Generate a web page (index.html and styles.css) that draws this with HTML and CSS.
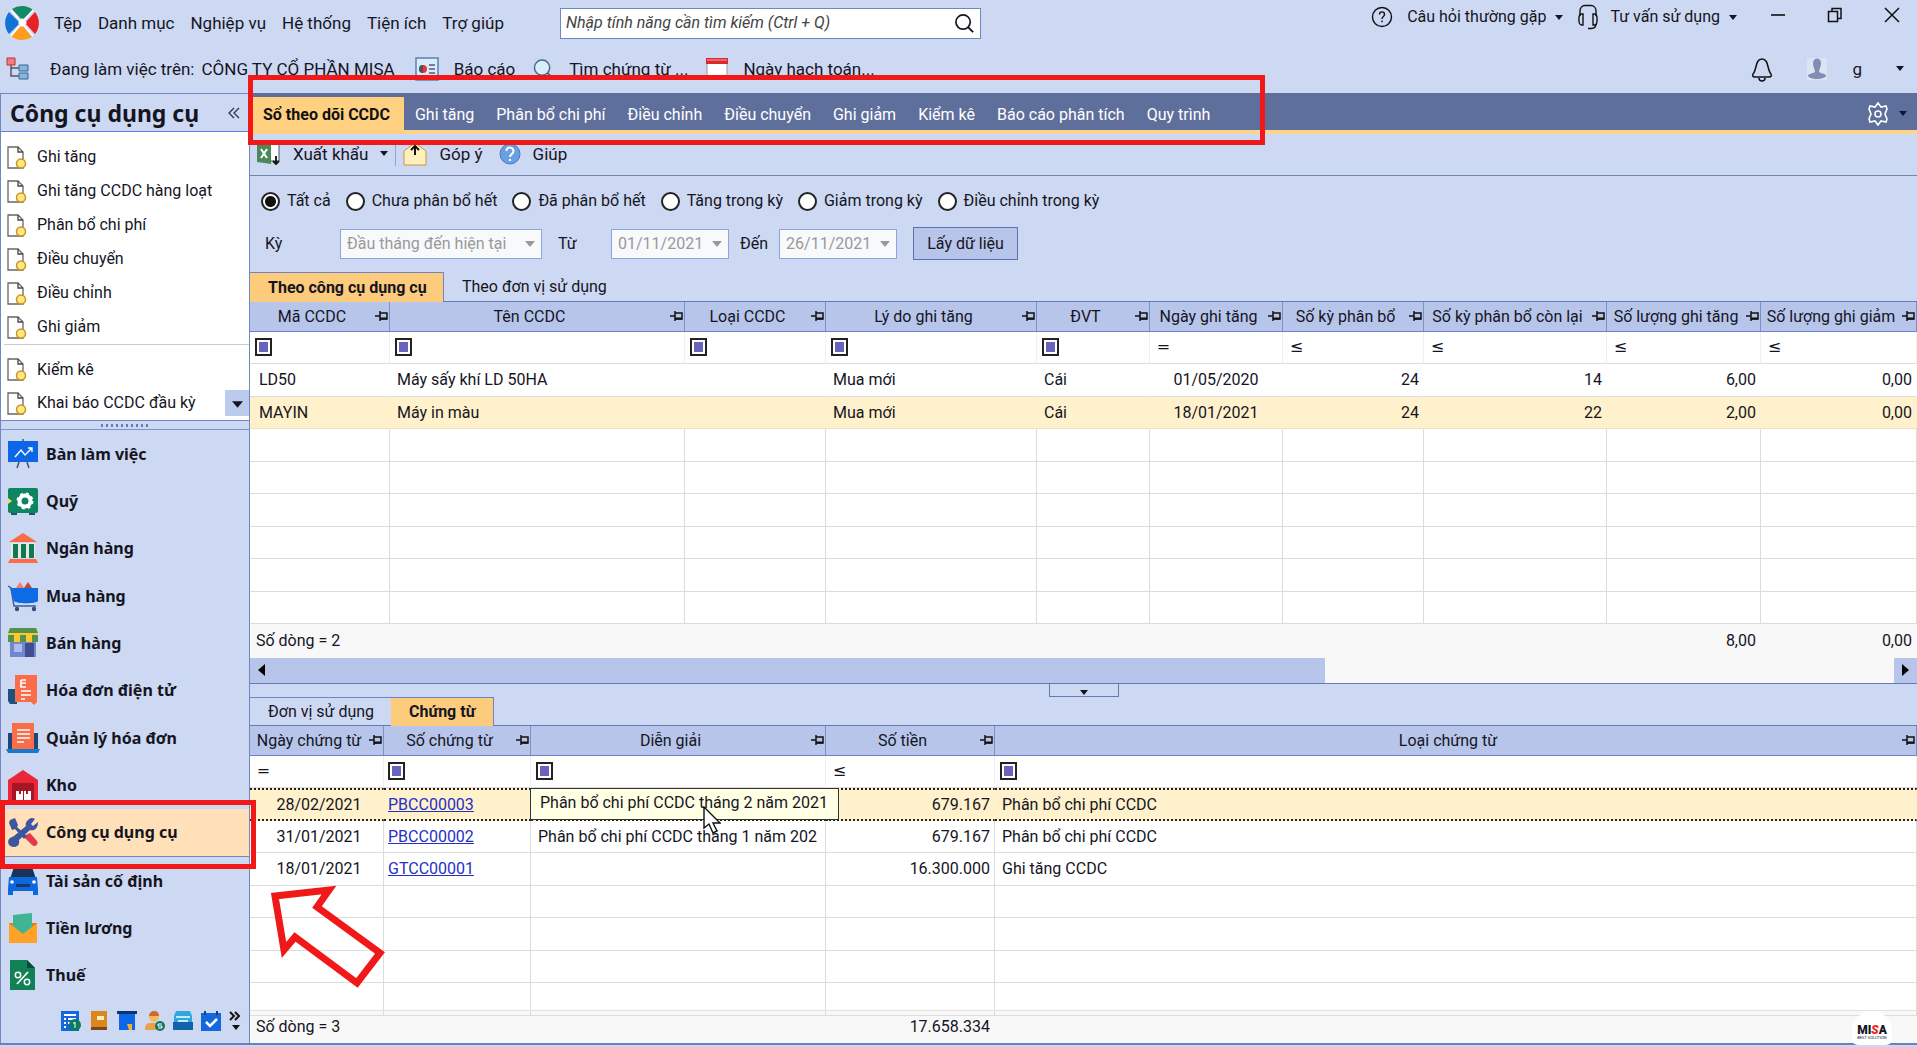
FILE: index.html
```
<!DOCTYPE html>
<html lang="vi">
<head>
	<meta charset="UTF-8">
	<meta name="viewport" content="width=device-width, initial-scale=1.0">
	<title>Công cụ dụng cụ</title>
	<link rel="stylesheet" href="styles.css">
</head>
<body>
	<svg class="sprite" aria-hidden="true">
		<symbol id="i-pin" viewBox="0 0 13 12"><path d="M0 6h5M5 1v10M5 3h7v6H5" fill="none" stroke="#111" stroke-width="1.5"/><path d="M5 8.5h7" stroke="#111" stroke-width="2"/></symbol>
		<symbol id="i-doc" viewBox="0 0 20 23"><path d="M1 1h10l5 5v16H1z" fill="#fff" stroke="#666" stroke-width="1.3"/><path d="M11 1v5h5" fill="none" stroke="#444" stroke-width="1.3"/><circle cx="14" cy="17.5" r="4.5" fill="#ffe680" stroke="#c99420" stroke-width="1.5"/></symbol>
		<symbol id="i-down" viewBox="0 0 10 6"><path d="M0 0h10L5 6z" fill="currentColor"/></symbol>
		<symbol id="i-search" viewBox="0 0 22 22"><circle cx="9.500" cy="9.500" r="7.500" fill="none" stroke="currentColor" stroke-width="1.8"/><path d="M15 15l5 5" stroke="currentColor" stroke-width="2"/></symbol>
	</svg>

	<header class="titlebar">
		<svg class="logo" viewBox="0 0 36 36">
			<path d="M8 4A17.500 17.500 0 0 1 29 5L18 15z" fill="#128a63"/>
			<path d="M31 7a17.500 17.500 0 0 1 0 22L21 18z" fill="#ea2027"/>
			<path d="M28 32A17.500 17.500 0 0 1 7 31l11-11z" fill="#ff9d1c"/>
			<path d="M5 29A17.500 17.500 0 0 1 5 7l11 11z" fill="#1273d4"/>
			<path d="M18 13l5 5-5 4-4-4z" fill="#fff"/>
			<path d="M7 5l22 26M29 5L7 31" stroke="#fff" stroke-width="1.5"/>
		</svg>
		<nav class="menu">
			<a href="#">Tệp</a>
			<a href="#">Danh mục</a>
			<a href="#">Nghiệp vụ</a>
			<a href="#">Hệ thống</a>
			<a href="#">Tiện ích</a>
			<a href="#">Trợ giúp</a>
		</nav>
		<div class="search">
			<input type="text" aria-label="Tìm kiếm" placeholder="Nhập tính năng cần tìm kiếm (Ctrl + Q)">
			<svg width="21" height="21"><use href="#i-search"/></svg>
		</div>
		<div class="support">
			<button class="plain"><svg width="22" height="22" viewBox="0 0 22 22"><circle cx="11" cy="11" r="9.500" fill="none" stroke="#111" stroke-width="1.4"/><path d="M8.500 8.500c0-3.500 5-3.500 5 0 0 2-2.500 2-2.500 4.500M11 14.500v1.800" fill="none" stroke="#111" stroke-width="1.4"/></svg><span>Câu hỏi thường gặp</span><svg class="caret"><use href="#i-down"/></svg></button>
			<button class="plain"><svg width="22" height="26" viewBox="0 0 22 26"><path d="M3 12V7c0-3 2-5.500 5-5.500h6c3 0 5 2.500 5 5.500v5M19 20c0 3-2 4.500-5 4.500h-3" fill="none" stroke="#111" stroke-width="1.4"/><path d="M6 10v11H4.500C1 21 1 10 4.500 10zM16 10v11h1.500c3.500 0 3.500-11 0-11z" fill="none" stroke="#111" stroke-width="1.4"/></svg><span>Tư vấn sử dụng</span><svg class="caret"><use href="#i-down"/></svg></button>
		</div>
		<div class="window-buttons">
			<button aria-label="Thu nhỏ"><svg width="16" height="16"><path d="M1 8h14" stroke="#111" stroke-width="1.6"/></svg></button>
			<button aria-label="Khôi phục"><svg width="16" height="16"><path d="M1.500 4.500h9v10h-9zM5 4V1.500h9v10h-3.500" fill="none" stroke="#111" stroke-width="1.5"/></svg></button>
			<button aria-label="Đóng"><svg width="16" height="16"><path d="M1 1l14 14M15 1L1 15" stroke="#111" stroke-width="1.5"/></svg></button>
		</div>
	</header>

	<div class="infobar">
		<svg class="tree" width="24" height="24" viewBox="0 0 24 24"><path d="M5 8v11h8M5 11h8" fill="none" stroke="#556" stroke-width="1.500"/><path d="M1 1h8v7H1z" fill="#f47c7c" stroke="#b33" /><path d="M13 8h9v6h-9zM13 16h9v6h-9z" fill="#86b6e0" stroke="#3b6691"/></svg>
		<span class="workplace">Đang làm việc trên:</span>
		<span class="company">CÔNG TY CỔ PHẦN MISA</span>
		<button class="plain"><svg width="24" height="24" viewBox="0 0 24 24"><path d="M1 1h22v22H1z" fill="#d9ecfa" stroke="#5682b4" stroke-width="1.500"/><circle cx="8" cy="12" r="4" fill="#e33"/><path d="M8 8a4 4 0 0 0 0 8z" fill="#456"/><path d="M14 8h6M14 12h6M14 16h6" stroke="#557" stroke-width="1.500"/></svg><span>Báo cáo</span></button>
		<button class="plain"><svg width="21" height="24" viewBox="0 0 22 22"><circle cx="9.500" cy="9.500" r="8" fill="#d7effa" stroke="#456a8d" stroke-width="1.500"/><path d="M15 15l6 6" stroke="#456a8d" stroke-width="2"/></svg><span>Tìm chứng từ ...</span></button>
		<button class="plain"><svg width="22" height="22" viewBox="0 0 22 22"><path d="M1 1h20v20H1z" fill="#fff" stroke="#999"/><path d="M0 0h22v6H0z" fill="#d9292f"/><path d="M1 2h20" stroke="#f8a5a5"/></svg><span>Ngày hạch toán...</span></button>
		<div class="account">
			<svg width="22" height="26" viewBox="0 0 22 26"><path d="M2 18c4-4 2-15 9-15s5 11 9 15c1 2 0 3-2 3H4c-2 0-3-1-2-3zM8 22c0 4 6 4 6 0" fill="none" stroke="#111" stroke-width="1.500"/></svg>
			<svg width="20" height="22" viewBox="0 0 20 22"><path d="M0 0h20v22H0z" fill="#dce4f4"/><path d="M6 5c0-6 8-6 8 0 0 4-2 6-2 9 2 2 7 1 7 4-2 4-16 4-18 0 0-3 5-2 7-4 0-3-2-5-2-9z" fill="#818db3"/></svg>
			<span>g</span>
			<svg class="caret"><use href="#i-down"/></svg>
		</div>
	</div>

	<div class="workspace">
		<aside class="sidebar">
			<h1>Công cụ dụng cụ <button class="plain" aria-label="Thu gọn"><svg width="12" height="12"><path d="M6 1L1 6l5 5M11 1L6 6l5 5" fill="none" stroke="#334" stroke-width="1.300"/></svg></button></h1>
			<ul class="tasks">
				<li><svg><use href="#i-doc"/></svg><a href="#">Ghi tăng</a></li>
				<li><svg><use href="#i-doc"/></svg><a href="#">Ghi tăng CCDC hàng loạt</a></li>
				<li><svg><use href="#i-doc"/></svg><a href="#">Phân bổ chi phí</a></li>
				<li><svg><use href="#i-doc"/></svg><a href="#">Điều chuyển</a></li>
				<li><svg><use href="#i-doc"/></svg><a href="#">Điều chỉnh</a></li>
				<li><svg><use href="#i-doc"/></svg><a href="#">Ghi giảm</a></li>
				<li class="divided"><svg><use href="#i-doc"/></svg><a href="#">Kiểm kê</a></li>
				<li><svg><use href="#i-doc"/></svg><a href="#">Khai báo CCDC đầu kỳ</a><button class="scroll-down" aria-label="Cuộn xuống"><svg><use href="#i-down"/></svg></button></li>
			</ul>
			<div class="grip"></div>
			<nav class="modules">
				<a href="#"><svg viewBox="0 0 30 30"><path d="M15 0v3M11 23l-2 6M19 23l2 6" stroke="#456" stroke-width="1.500"/><path d="M0 2h30v21H0z" fill="#0d65e8"/><path d="M7 18l6-7 4 5 7-7M20 9h4v4" fill="none" stroke="#fff" stroke-width="1.400"/></svg>Bàn làm việc</a>
				<a href="#"><svg viewBox="0 0 30 30"><path d="M3 26h6v3H3zM21 26h6v3h-6z" fill="#256"/><rect y="2" width="30" height="25" rx="2" fill="#0c8560"/><path d="M0 12l4 3-4 3z" fill="#ffdc3d"/><circle cx="17" cy="15" r="5.500" fill="none" stroke="#fff" stroke-width="4"/><circle cx="17" cy="15" r="7.500" fill="none" stroke="#fff" stroke-width="2" stroke-dasharray="3 3"/></svg>Quỹ</a>
				<a href="#"><svg viewBox="0 0 30 30"><path d="M1 9L15 0l14 9zM2 26h26l2 4H0z" fill="#fb6b46"/><path d="M3 10h24v15H3z" fill="#e8e9e4"/><path d="M5 11h5v14H5zM13 11h5v14h-5zM21 11h5v14h-5z" fill="#0d7a55"/></svg>Ngân hàng</a>
				<a href="#"><svg viewBox="0 0 30 30"><path d="M8 7l4-6 4 6z" fill="#ef8069"/><path d="M16 7l4-6 4 6z" fill="#c44934"/><path d="M0 5l3 2 3 18h22" fill="none" stroke="#345f9d" stroke-width="1.500"/><path d="M2 7h28v13c-2 3-22 3-24 0z" fill="#0e6be6"/><circle cx="9" cy="28" r="2.200" fill="#344c80"/><circle cx="26" cy="28" r="2.200" fill="#344c80"/></svg>Mua hàng</a>
				<a href="#"><svg viewBox="0 0 30 30"><path d="M2 10h26v19H2z" fill="#7187ce"/><path d="M17 15h9v14h-9z" fill="#414e91"/><path d="M6 16h8v8H6z" fill="#aebced"/><path d="M2 0h26l2 7v7H0V7z" fill="#ffc62d"/><path d="M0 7h6v7H0zM12 7h6v7h-6zM24 7h6v7h-6zM2 0h26l2 5H0z" fill="#51924d"/></svg>Bán hàng</a>
				<a href="#"><svg viewBox="0 0 30 30"><path d="M0 14h9v15H2l-2-3z" fill="#1c5282"/><path d="M7 0h22v27l-3 3-3-3H7z" fill="#fb6d48"/><path d="M13 5h5M13 8h5M13 5v7h5M13 16h10M13 20h10M13 24h4" fill="none" stroke="#fff" stroke-width="1.700"/></svg>Hóa đơn điện tử</a>
				<a href="#"><svg viewBox="0 0 30 30"><path d="M0 10h30v17H0z" fill="#1b477b"/><path d="M4 0h22v26H4z" fill="#fb6d48"/><path d="M9 7h13M9 11h13M9 15h13M9 19h7" stroke="#fff" stroke-width="1.500"/><path d="M-2 26h34l-2 4H0z" fill="#1879c8"/></svg>Quản lý hóa đơn</a>
				<a href="#"><svg viewBox="0 0 30 30"><path d="M0 10L15 0l15 10v20H0z" fill="#e92738"/><path d="M4 13h22v17H4z" fill="#a71627"/><path d="M8 21h3v3h2v-3h2v9H8zM16 21h2v3h2v-3h3v9h-7z" fill="#fff"/></svg>Kho</a>
				<a href="#" class="current" aria-current="page"><svg viewBox="0 0 30 30"><path d="M18 18l4-2 7 8c2 3-2 7-5 4l-7-7z" fill="#e3394b"/><path d="M2 3l5-2 3 7-1 2 10 9-3 3-9-10-3 1-3-7z" fill="#3c56a0"/><path d="M20 3c3-3 5-2 7-1l-4 5 2 2 5-4c0 7-4 9-8 8L11 23c1 5-2 7-5 7-5 0-8-5-4-9l4-2L18 9c-1-2 0-4 2-6z" fill="#3c56a0"/></svg>Công cụ dụng cụ<span class="highlight"></span></a>
				<a href="#"><svg viewBox="0 0 30 30"><path d="M6 1h18l4 12H2z" fill="#17325d"/><path d="M1 11h28l1 12v6h-5v-4H5v4H0v-6z" fill="#0d68de"/><path d="M8 18h14v3H8z" fill="#183966"/><circle cx="4" cy="16" r="1.800" fill="#fff"/><circle cx="26" cy="16" r="1.800" fill="#fff"/></svg>Tài sản cố định</a>
				<a href="#"><svg viewBox="0 0 30 30"><path d="M1 10h28v18H1z" fill="#df7919"/><path d="M5 2l19-2v15l-9 7-10-7z" fill="#3fb596"/><path d="M1 10l14 11L29 10v20H1z" fill="#ffa226"/></svg>Tiền lương</a>
				<a href="#"><svg viewBox="0 0 30 30"><path d="M2 0h17l8 8v22H2z" fill="#128056"/><path d="M19 0v8h8z" fill="#074c37"/><path d="M9 24L20 12" stroke="#fff" stroke-width="1.700"/><circle cx="10" cy="15" r="2.700" fill="none" stroke="#fff" stroke-width="1.500"/><circle cx="19" cy="22" r="2.700" fill="none" stroke="#fff" stroke-width="1.500"/></svg>Thuế</a>
			</nav>
			<div class="shortcuts">
				<button aria-label="Hóa đơn"><svg viewBox="0 0 20 20"><path d="M0 0h18v20H0z" fill="#1268dc"/><path d="M3 4h12M3 8h2M7 8h8M3 12h2M7 12h3M3 16h2" stroke="#fff" stroke-width="2"/><circle cx="14" cy="14" r="6" fill="#087b63"/><path d="M14 11v6M12 12h2" stroke="#fff"/></svg></button>
				<button aria-label="Sổ"><svg viewBox="0 0 20 20"><path d="M2 0h16v19H2z" fill="#df861b"/><path d="M2 16h16v3H2z" fill="#7c451e"/><path d="M8 5h7v4H8z" fill="#fff1cb"/></svg></button>
				<button aria-label="Hợp đồng"><svg viewBox="0 0 20 20"><path d="M2 1h16v18H2z" fill="#0c66e6"/><path d="M0 0h20v3H0z" fill="#0a3574"/><path d="M10 13h5v6h-3z" fill="#eeb337"/></svg></button>
				<button aria-label="Khách hàng"><svg viewBox="0 0 20 20"><circle cx="9" cy="6" r="5" fill="#f6b95d"/><path d="M4 5c0-6 10-7 10 0z" fill="#d26830"/><path d="M0 19c0-7 3-7 8-7s8 2 8 7z" fill="#ec9f43"/><circle cx="15" cy="15" r="5" fill="#0c7560"/><path d="M17 13h-4v2h4v2h-4" fill="none" stroke="#fff"/></svg></button>
				<button aria-label="Kho lưu"><svg viewBox="0 0 20 20"><path d="M3 0h14l2 5v9H1V5z" fill="#31a6dc"/><path d="M0 11h20v8H0z" fill="#1263a8"/><path d="M3 6h14M5 10h10" stroke="#b9edff" stroke-width="2"/></svg></button>
				<button aria-label="Công việc"><svg viewBox="0 0 20 20"><path d="M0 2h20v18H0z" fill="#1268dc"/><path d="M4 0v4M16 0v4" stroke="#164378" stroke-width="2"/><path d="M5 11l4 4 7-7" fill="none" stroke="#fff" stroke-width="2.500"/></svg></button>
				<button aria-label="Thêm"><svg viewBox="0 0 20 20"><path d="M1 1l4 4-4 4M6 1l4 4-4 4" fill="none" stroke="#111" stroke-width="2"/><path d="M3 14h8l-4 5z" fill="#111"/></svg></button>
			</div>
		</aside>

		<main class="content">
			<nav class="tabbar">
				<a href="#" class="active">Sổ theo dõi CCDC</a>
				<a href="#">Ghi tăng</a>
				<a href="#">Phân bổ chi phí</a>
				<a href="#">Điều chỉnh</a>
				<a href="#">Điều chuyển</a>
				<a href="#">Ghi giảm</a>
				<a href="#">Kiểm kê</a>
				<a href="#">Báo cáo phân tích</a>
				<a href="#">Quy trình</a>
				<button class="plain settings" aria-label="Tùy chọn"><svg width="22" height="24" viewBox="0 0 22 24"><path d="M11 1l3 4 5-1 1 3-2 5 2 5-1 3-5-1-3 4-3-4-5 1-1-3 2-5-2-5 1-3 5 1z" fill="none" stroke="#fff" stroke-width="1.600"/><circle cx="11" cy="12" r="3" fill="none" stroke="#fff" stroke-width="1.600"/></svg><svg class="caret"><use href="#i-down"/></svg></button>
				<span class="highlight"></span>
			</nav>

			<div class="toolbar">
				<button class="plain"><svg width="24" height="24" viewBox="0 0 24 24"><path d="M10 2h12v17H10z" fill="#fff" stroke="#456"/><path d="M0 3l14-2v21L0 20z" fill="#4c8958"/><path d="M4 7l6 9M10 7l-6 9" stroke="#fff" stroke-width="2"/><path d="M19 14v7M16 19l3 3 3-3" fill="none" stroke="#111" stroke-width="1.800"/></svg><span>Xuất khẩu</span><svg class="caret"><use href="#i-down"/></svg></button>
				<button class="plain split"><svg width="24" height="24" viewBox="0 0 24 24"><path d="M1 9l11-8 11 8v14H1z" fill="#fff0bd" stroke="#c59941"/><path d="M12 13V5M8 8l4-4 4 4" fill="none" stroke="#111" stroke-width="2"/></svg><span>Góp ý</span></button>
				<button class="plain"><svg width="22" height="22" viewBox="0 0 22 22"><circle cx="11" cy="11" r="10" fill="#69a0e2" stroke="#4779c1"/><path d="M7.500 8c0-5 7-4 7 0 0 3-3.500 3-3.500 6M11 16v2" fill="none" stroke="#fff" stroke-width="2"/></svg><span>Giúp</span></button>
			</div>

			<form class="filters">
				<div class="radios">
					<label><input type="radio" name="scope" checked>Tất cả</label>
					<label><input type="radio" name="scope">Chưa phân bổ hết</label>
					<label><input type="radio" name="scope">Đã phân bổ hết</label>
					<label><input type="radio" name="scope">Tăng trong kỳ</label>
					<label><input type="radio" name="scope">Giảm trong kỳ</label>
					<label><input type="radio" name="scope">Điều chỉnh trong kỳ</label>
				</div>
				<div class="period">
					<label class="first" for="period">Kỳ</label>
					<div class="picker wide"><select id="period" disabled><option>Đầu tháng đến hiện tại</option></select><svg class="caret"><use href="#i-down"/></svg></div>
					<label class="from" for="from">Từ</label>
					<div class="picker"><input type="text" id="from" value="01/11/2021" disabled><svg class="caret"><use href="#i-down"/></svg></div>
					<label for="to">Đến</label>
					<div class="picker"><input type="text" id="to" value="26/11/2021" disabled><svg class="caret"><use href="#i-down"/></svg></div>
					<button type="button" class="load">Lấy dữ liệu</button>
				</div>
			</form>

			<div class="subtabs">
				<button class="on wide">Theo công cụ dụng cụ</button>
				<button>Theo đơn vị sử dụng</button>
			</div>
			<div class="grid">
				<table>
					<colgroup><col class="w140"><col class="w295"><col class="w141"><col class="w211"><col class="w113"><col class="w133"><col class="w141"><col class="w183"><col class="w154"><col></colgroup>
					<thead>
						<tr>
							<th>Mã CCDC<svg><use href="#i-pin"/></svg></th>
							<th>Tên CCDC<svg><use href="#i-pin"/></svg></th>
							<th>Loại CCDC<svg><use href="#i-pin"/></svg></th>
							<th>Lý do ghi tăng<svg><use href="#i-pin"/></svg></th>
							<th>ĐVT<svg><use href="#i-pin"/></svg></th>
							<th>Ngày ghi tăng<svg><use href="#i-pin"/></svg></th>
							<th>Số kỳ phân bổ<svg><use href="#i-pin"/></svg></th>
							<th>Số kỳ phân bổ còn lại<svg><use href="#i-pin"/></svg></th>
							<th>Số lượng ghi tăng<svg><use href="#i-pin"/></svg></th>
							<th>Số lượng ghi giảm<svg><use href="#i-pin"/></svg></th>
						</tr>
						<tr class="filter">
							<td><button class="box" aria-label="Điều kiện"></button></td>
							<td><button class="box" aria-label="Điều kiện"></button></td>
							<td><button class="box" aria-label="Điều kiện"></button></td>
							<td><button class="box" aria-label="Điều kiện"></button></td>
							<td><button class="box" aria-label="Điều kiện"></button></td>
							<td><button class="op">=</button></td>
							<td><button class="op">≤</button></td>
							<td><button class="op">≤</button></td>
							<td><button class="op">≤</button></td>
							<td><button class="op">≤</button></td>
						</tr>
					</thead>
					<tbody>
						<tr class="filled"><td>LD50</td><td>Máy sấy khí LD 50HA</td><td></td><td>Mua mới</td><td>Cái</td><td class="date">01/05/2020</td><td class="num">24</td><td class="num">14</td><td class="num">6,00</td><td class="num">0,00</td></tr>
						<tr class="filled selected"><td>MAYIN</td><td>Máy in màu</td><td></td><td>Mua mới</td><td>Cái</td><td class="date">18/01/2021</td><td class="num">24</td><td class="num">22</td><td class="num">2,00</td><td class="num">0,00</td></tr>
						<tr><td></td><td></td><td></td><td></td><td></td><td></td><td></td><td></td><td></td><td></td></tr>
						<tr><td></td><td></td><td></td><td></td><td></td><td></td><td></td><td></td><td></td><td></td></tr>
						<tr><td></td><td></td><td></td><td></td><td></td><td></td><td></td><td></td><td></td><td></td></tr>
						<tr><td></td><td></td><td></td><td></td><td></td><td></td><td></td><td></td><td></td><td></td></tr>
						<tr><td></td><td></td><td></td><td></td><td></td><td></td><td></td><td></td><td></td><td></td></tr>
						<tr><td></td><td></td><td></td><td></td><td></td><td></td><td></td><td></td><td></td><td></td></tr>
					</tbody>
					<tfoot>
						<tr><td>Số dòng = 2</td><td></td><td></td><td></td><td></td><td></td><td></td><td></td><td class="num">8,00</td><td class="num">0,00</td></tr>
					</tfoot>
				</table>
			</div>
			<div class="hscroll">
				<button class="thumb" aria-label="Cuộn trái"><svg width="7" height="12"><path d="M7 0v12L0 6z"/></svg></button>
				<button class="next" aria-label="Cuộn phải"><svg width="7" height="12"><path d="M0 0v12l7-6z"/></svg></button>
			</div>
			<div class="splitter"><button aria-label="Thu gọn"><svg class="caret"><use href="#i-down"/></svg></button></div>

			<div class="subtabs lower">
				<button>Đơn vị sử dụng</button>
				<button class="on">Chứng từ</button>
			</div>
			<div class="grid detail">
				<table>
					<colgroup><col class="w134"><col class="w147"><col class="w295"><col class="w169"><col></colgroup>
					<thead>
						<tr>
							<th>Ngày chứng từ<svg><use href="#i-pin"/></svg></th>
							<th>Số chứng từ<svg><use href="#i-pin"/></svg></th>
							<th>Diễn giải<svg><use href="#i-pin"/></svg></th>
							<th>Số tiền<svg><use href="#i-pin"/></svg></th>
							<th>Loại chứng từ<svg><use href="#i-pin"/></svg></th>
						</tr>
						<tr class="filter">
							<td><button class="op">=</button></td>
							<td><button class="box" aria-label="Điều kiện"></button></td>
							<td><button class="box" aria-label="Điều kiện"></button></td>
							<td><button class="op">≤</button></td>
							<td><button class="box" aria-label="Điều kiện"></button></td>
						</tr>
					</thead>
					<tbody>
						<tr class="filled selected focused"><td class="date">28/02/2021</td><td><a href="#">PBCC00003</a></td><td class="has-tip"><span class="tip">Phân bổ chi phí CCDC tháng 2 năm 2021<svg class="cursor" viewBox="0 0 18 28"><path d="M1 1v21l5-4 4 9 4-2-4-8h7z" fill="#fff" stroke="#111" stroke-width="1.400"/></svg></span></td><td class="num">679.167</td><td>Phân bổ chi phí CCDC</td></tr>
						<tr><td class="date">31/01/2021</td><td><a href="#">PBCC00002</a></td><td>Phân bổ chi phí CCDC tháng 1 năm 202</td><td class="num">679.167</td><td>Phân bổ chi phí CCDC</td></tr>
						<tr><td class="date">18/01/2021</td><td><a href="#">GTCC00001</a></td><td></td><td class="num">16.300.000</td><td>Ghi tăng CCDC</td></tr>
						<tr><td></td><td></td><td></td><td></td><td></td></tr>
						<tr><td></td><td></td><td></td><td></td><td></td></tr>
						<tr><td></td><td></td><td></td><td></td><td></td></tr>
						<tr><td></td><td></td><td></td><td></td><td></td></tr>
					</tbody>
				</table>
				<svg class="pointer" viewBox="0 0 122 110"><path d="M8 15l54-6-12 17 63 46-23 30-62-46-11 13z" fill="none" stroke="#f01818" stroke-width="7"/></svg>
			</div>
			<div class="totals">
				<span class="count">Số dòng = 3</span>
				<span class="sum">17.658.334</span>
			</div>
			<div class="brand"><b>MI<i>S</i>A</b><small>BEST SOLUTION</small></div>
		</main>
	</div>
</body>
</html>
```

FILE: styles.css
```
* {
	margin: 0;
	padding: 0;
	box-sizing: border-box;
}

body {
	height: 100vh;
	display: flex;
	flex-direction: column;
	overflow: hidden;
	font-family: Roboto, "Liberation Sans", sans-serif;
	font-size: 16px;
	line-height: 20px;
	color: #15151f;
	background: #cdd8f2;
}

a {
	color: inherit;
	text-decoration: none;
}

button,
input,
select {
	font: inherit;
	color: inherit;
}

button {
	border: none;
	background: none;
}

svg {
	flex: none;
}

.sprite {
	position: absolute;
	width: 0;
	height: 0;
}

.plain {
	display: flex;
	align-items: center;
	white-space: nowrap;
}

.caret {
	width: 8px;
	height: 5px;
}

/* title bar */
.titlebar {
	display: flex;
	align-items: center;
	height: 46px;
	padding-left: 4px;
	font-size: 17px;
}

.logo {
	width: 36px;
	height: 36px;
}

.menu {
	display: flex;
	gap: 16px;
	width: 520px;
	padding-left: 14px;
}

.search {
	display: flex;
	align-items: center;
	width: 421px;
	height: 31px;
	padding: 0 5px;
	background: #fff;
	border: 1px solid #6f87c0;
}

.search input {
	flex: 1;
	border: none;
	outline: none;
	font-size: 16px;
	font-style: italic;
}

.search input::placeholder {
	color: #444;
}

.support {
	display: flex;
	gap: 14px;
	margin-left: auto;
	margin-bottom: 12px;
	font-size: 16px;
}

.support span {
	margin: 0 9px 0 14px;
}

.support .plain + .plain span {
	margin-left: 11px;
}

.window-buttons {
	display: flex;
	gap: 41px;
	margin: 0 17px 16px 33px;
}

.window-buttons svg {
	display: block;
}

.infobar {
	display: flex;
	align-items: center;
	height: 47px;
	padding: 0 0 2px 6px;
	font-size: 17px;
}

.workplace {
	margin: 0 7px 0 20px;
}

.company {
	margin-right: 20px;
}

.infobar .plain {
	gap: 15px;
	margin-right: 18px;
}

.account {
	display: flex;
	align-items: center;
	margin-left: auto;
	padding-right: 13px;
}

.account svg + svg {
	margin-left: 34px;
}

.account span {
	margin: 0 34px 0 25px;
}

.workspace {
	flex: 1;
	display: flex;
	min-height: 0;
	border-bottom: 2px solid #6c82c0;
	margin-bottom: 2px;
}

/* sidebar */
.sidebar {
	display: flex;
	flex-direction: column;
	width: 250px;
	border: 1px solid #7187bf;
	border-bottom: none;
}

.sidebar h1 {
	display: flex;
	align-items: center;
	justify-content: space-between;
	height: 38px;
	padding: 0 9px;
	font-family: "Noto Sans", sans-serif;
	font-size: 23px;
	line-height: 30px;
	border-bottom: 1px solid #6d78e0;
	white-space: nowrap;
}

.tasks {
	list-style: none;
	padding-top: 8px;
	background: #fff;
}

.tasks li {
	display: flex;
	align-items: center;
	height: 34px;
	padding-left: 6px;
}

.tasks li svg {
	width: 20px;
	height: 23px;
	margin-right: 10px;
}

.tasks .divided {
	height: 42px;
	margin-left: 3px;
	padding: 8px 0 0 3px;
	border-top: 1px solid #ccc;
}

.tasks .scroll-down {
	width: 24px;
	height: 26px;
	margin: 0 0 0 auto;
	background: #bccaed;
}

.tasks .scroll-down svg {
	width: 11px;
	height: 7px;
	margin: 0;
}

.grip {
	flex: none;
	height: 10px;
	border-top: 1px solid #7187bf;
	border-bottom: 1px solid #7c93d0;
}

.grip::before {
	content: "";
	display: block;
	width: 48px;
	height: 3px;
	margin: 3px auto 0;
	background: repeating-linear-gradient(90deg, #667cb4 0 2px, transparent 2px 5px);
}

.modules {
	flex: 1;
	display: flex;
	flex-direction: column;
	min-height: 0;
}

.modules a {
	position: relative;
	flex: 1;
	display: flex;
	align-items: center;
	gap: 8px;
	padding-left: 7px;
	font-family: "Noto Sans", sans-serif;
	font-weight: bold;
}

.modules a > svg {
	width: 30px;
	height: 30px;
	overflow: visible;
}

.modules .current {
	background: #ffe0b8;
	border-bottom: 1px solid #7187bf;
	z-index: 2;
}

/* red marker frames */
.highlight {
	position: absolute;
	border: 5px solid #f01818;
	pointer-events: none;
}

.modules .highlight {
	inset: -9px -7px -13px -1px;
}

.tabbar .highlight {
	top: -18px;
	bottom: -15px;
	left: -2px;
	width: 1017px;
}

.shortcuts {
	display: flex;
	align-items: center;
	justify-content: flex-end;
	gap: 8px;
	height: 44px;
}

.shortcuts svg {
	display: block;
	width: 20px;
	height: 20px;
}

/* main area */
.content {
	position: relative;
	flex: 1;
	display: flex;
	flex-direction: column;
	min-width: 0;
}

.tabbar {
	position: relative;
	z-index: 1;
	display: flex;
	align-items: stretch;
	height: 41px;
	padding: 4px 0 0 2px;
	color: #fff;
	background: #5f6f9c;
	border-bottom: 4px solid #fdd48e;
}

.tabbar a {
	padding: 0 11px;
	line-height: 36px;
	white-space: nowrap;
}

.tabbar .active {
	padding-right: 14px;
	color: #111;
	font-weight: bold;
	background: #ffd080;
	margin-bottom: -4px;
}

.settings {
	gap: 10px;
	margin-left: auto;
	padding-right: 10px;
}

.settings .caret {
	color: #10152e;
}

.toolbar {
	display: flex;
	align-items: center;
	gap: 16px;
	height: 42px;
	padding: 0 0 2px 7px;
	border-bottom: 1px solid #7283ad;
	font-size: 17px;
}

.toolbar span {
	margin-left: 12px;
}

.toolbar .caret {
	margin-left: 12px;
}

.toolbar .plain {
	height: 24px;
}

.toolbar .split {
	margin-left: -9px;
	padding-left: 7px;
	border-left: 1px solid #8da6dc;
}

.filters {
	height: 96px;
	padding: 12px 0 0 11px;
}

.radios {
	display: flex;
	gap: 15px;
	height: 26px;
}

.radios label {
	display: flex;
	align-items: center;
	gap: 7px;
}

.radios input {
	appearance: none;
	width: 19px;
	height: 19px;
	background: #fff;
	border: 2px solid #222;
	border-radius: 50%;
}

.radios input:checked {
	background: radial-gradient(circle, #111 0 5px, #fff 6px);
}

.period {
	display: flex;
	align-items: center;
	gap: 11px;
	padding: 13px 0 0 4px;
}

.period .first {
	width: 64px;
}

.period .from {
	width: 42px;
	margin-left: 5px;
}

.picker {
	display: flex;
	align-items: center;
	width: 118px;
	height: 30px;
	padding: 0 6px;
	color: #999;
	background: #f8f9fb;
	border: 1px solid #8da4dc;
}

.picker.wide {
	width: 202px;
}

.picker input,
.picker select {
	flex: 1;
	min-width: 0;
	appearance: none;
	border: none;
	background: none;
	color: #999;
	opacity: 1;
}

.picker .caret {
	width: 10px;
	height: 6px;
}

.load {
	width: 105px;
	height: 33px;
	margin-left: 5px;
	background: #b7c5ea;
	border: 1px solid #5a70b0;
}

.subtabs {
	display: flex;
	height: 30px;
	border-bottom: 1px solid #6379b8;
}

.subtabs button {
	padding: 0 18px;
	white-space: nowrap;
}

.subtabs .on {
	font-weight: bold;
	background: #fdcb7c;
	border: 1px solid #6f84c4;
	border-width: 1px 1px 0 0;
	margin-bottom: -1px;
}

.subtabs .wide {
	width: 194px;
}

.lower {
	height: 29px;
}

.lower button {
	border-top: 1px solid #6f84c4;
	min-width: 100px;
}

.lower button:first-child {
	width: 141px;
}

/* data grids */
.grid {
	position: relative;
	background: #fff;
}

.grid table {
	width: 100%;
	table-layout: fixed;
	border-collapse: separate;
	border-spacing: 0;
}

.w113 { width: 113px; }
.w133 { width: 133px; }
.w134 { width: 134px; }
.w140 { width: 140px; }
.w141 { width: 141px; }
.w147 { width: 147px; }
.w154 { width: 154px; }
.w169 { width: 169px; }
.w183 { width: 183px; }
.w211 { width: 211px; }
.w295 { width: 295px; }

.grid th {
	position: relative;
	height: 30px;
	padding-right: 15px;
	font-weight: normal;
	white-space: nowrap;
	background: #b7c5ea;
	border-right: 1px solid #7b8fca;
	border-bottom: 1px solid #6d80c8;
}

/* column pin sits over the header's right edge */
.grid th svg {
	position: absolute;
	top: 8px;
	right: 1px;
	width: 13px;
	height: 12px;
}

.grid td {
	height: 33px;
	padding: 0 4px 0 7px;
	white-space: nowrap;
	border-right: 1px solid #dcdcdc;
	border-bottom: 1px solid #dcdcdc;
}

.grid td:first-child {
	padding-left: 9px;
}

.grid tbody tr:nth-child(even) td,
.grid .filter td {
	height: 32px;
}

.grid .filter td {
	padding: 0 0 2px 5px;
	border-right-color: #f0f0f0;
}

.grid .filled td {
	border-right-color: transparent;
}

.grid .selected td {
	background: #fff1cb;
	border-bottom-color: #f0dfc0;
}

.grid .num {
	text-align: right;
}

.grid .date {
	text-align: center;
	padding-left: 4px;
}

.grid td a {
	color: #2430c8;
	text-decoration: underline;
}

.grid tfoot td,
.grid tfoot td:first-child {
	height: 34px;
	background: #f8f8f8;
	border-color: #f8f8f8;
	padding-left: 6px;
}

.box {
	display: block;
	width: 17px;
	height: 18px;
	background: #6a63bd;
	border: 2px solid #222;
	box-shadow: inset 0 0 0 2px #fff;
}

.op {
	display: block;
	width: 17px;
	font-family: "DejaVu Sans", sans-serif;
	font-size: 16px;
}

.grid.detail {
	flex: 1;
	min-height: 0;
}

.detail .date {
	padding-left: 6px;
}

.detail td:nth-child(2) {
	padding-left: 4px;
}

.detail .focused td {
	border-top: 2px dotted #222;
	border-bottom: 2px dotted #222;
}

.detail .has-tip {
	position: relative;
}

.tip {
	position: absolute;
	z-index: 1;
	top: -2px;
	left: -1px;
	width: 309px;
	height: 32px;
	padding-left: 9px;
	line-height: 28px;
	background: #ffffe3;
	border: 1px solid #333;
}

.cursor {
	position: absolute;
	top: 17px;
	left: 172px;
	width: 18px;
	height: 28px;
}

.pointer {
	position: absolute;
	top: 155px;
	left: 17px;
	width: 122px;
	height: 110px;
}

.hscroll {
	display: flex;
	justify-content: space-between;
	height: 25px;
	background: #f8f8f8;
}

.thumb {
	width: 1075px;
	padding-left: 8px;
	text-align: left;
	background: #b7c5ea;
}

.next {
	width: 23px;
	background: #b7c5ea;
}

.splitter {
	height: 14px;
	border-top: 1px solid #6379b8;
	text-align: center;
}

.splitter button {
	display: block;
	width: 70px;
	height: 13px;
	margin: 0 auto;
	line-height: 8px;
	border: 1px solid #6379b8;
	border-top: none;
}

.totals {
	display: flex;
	align-items: center;
	height: 33px;
	padding-left: 6px;
	background: #f8f8f8;
	border-top: 1px solid #e2e2e2;
}

.totals .count {
	width: 570px;
}

.totals .sum {
	width: 164px;
	text-align: right;
}

.brand {
	position: absolute;
	right: 25px;
	bottom: -2px;
	width: 40px;
	height: 34px;
	padding-top: 13px;
	text-align: center;
	line-height: 12px;
	background: #fff;
	border-radius: 20px 20px 6px 6px;
}

.brand b {
	display: block;
	font-size: 12px;
	font-weight: 900;
}

.brand i {
	color: #e22;
}

.brand small {
	display: block;
	font-size: 4px;
	line-height: 4px;
}
```
